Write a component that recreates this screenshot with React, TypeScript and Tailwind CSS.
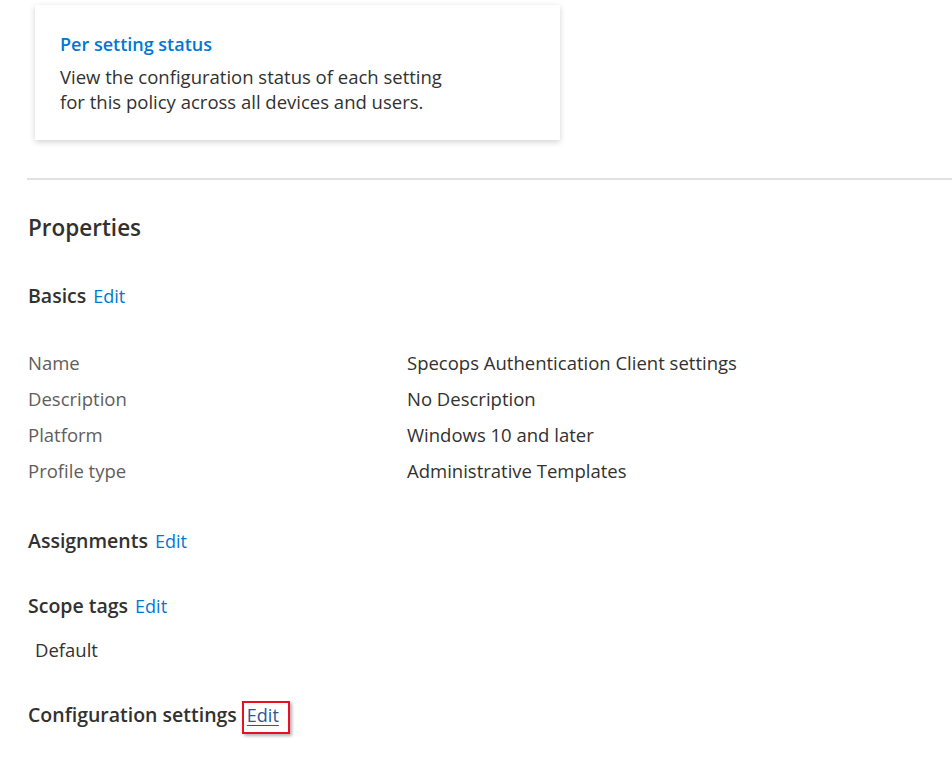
import React from 'react';

const rows = [
  ['Name', 'Specops Authentication Client settings'],
  ['Description', 'No Description'],
  ['Platform', 'Windows 10 and later'],
  ['Profile type', 'Administrative Templates'],
];

const SectionHead = ({ title, gap = 'gap-[7px]', children }: { title: string; gap?: string; children?: React.ReactNode }) => (
  <div className={`flex items-baseline ${gap} leading-[24px]`}>
    <span className="text-[19.5px] font-semibold text-[#323130]">{title}</span>
    {children ?? <a className="text-[18px] text-[#0078d4] cursor-pointer">Edit</a>}
  </div>
);

export default function App() {
  return (
    <div className="w-[952px] h-[767px] bg-white overflow-hidden [font-family:'Open_Sans',sans-serif]">
      <div className="pl-[35px] pt-[5px]">
        <div className="w-[525px] h-[135px] bg-white shadow-[0_2px_6px_rgba(0,0,0,0.18)] pl-[25px] pt-[27px]">
          <div className="text-[18px] leading-[24px] font-semibold text-[#0078d4]">Per setting status</div>
          <div className="mt-[8px] text-[18.5px] leading-[25px] text-[#323130]">
            View the configuration status of each setting
            <br />
            for this policy across all devices and users.
          </div>
        </div>
      </div>

      <div className="ml-[27px] mt-[38px] h-[2px] bg-[#e1e1e1]" />

      <div className="pl-[28px]">
        <h2 className="mt-[34px] text-[22.5px] leading-[28px] font-semibold text-[#323130]">Properties</h2>

        <div className="mt-[42px]">
          <SectionHead title="Basics" />
        </div>

        <div className="mt-[43px] flex flex-col">
          {rows.map(([k, v]) => (
            <div key={k} className="flex h-[36px] items-start text-[18.5px] leading-[24px]">
              <span className="w-[379px] text-[#605e5c]">{k}</span>
              <span className="text-[#323130]">{v}</span>
            </div>
          ))}
        </div>

        <div className="mt-[34px]">
          <SectionHead title="Assignments" />
        </div>

        <div className="mt-[41px]">
          <SectionHead title="Scope tags" />
        </div>

        <div className="mt-[20px] pl-[7px] text-[18.5px] leading-[24px] text-[#323130]">Default</div>

        <div className="mt-[41px]">
          <SectionHead title="Configuration settings" gap="gap-[10px]">
            <span className="relative inline-block">
              <a className="text-[18px] text-[#2b5797] underline underline-offset-[3px] cursor-pointer">Edit</a>
              <span className="absolute -left-[5px] -top-[2px] w-[48px] h-[33px] border-2 border-[#e81123] shadow-[2px_2px_3px_rgba(0,0,0,0.3)]" />
            </span>
          </SectionHead>
        </div>
      </div>
    </div>
  );
}
